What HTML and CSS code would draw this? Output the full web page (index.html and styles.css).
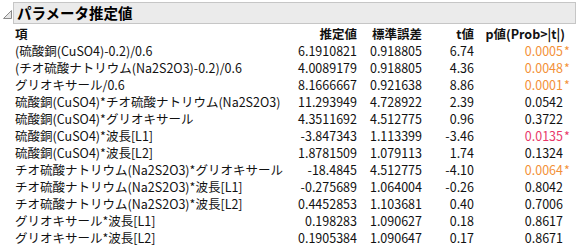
FILE: index.html
```html
<!DOCTYPE html>
<html lang="ja">
<head>
<meta charset="utf-8">
<title>パラメータ推定値</title>
<link rel="stylesheet" href="styles.css">
</head>
<body>
<div class="report">
  <div class="title-row">
    <svg class="tri" width="9" height="9" viewBox="0 0 9 9"><polygon points="8.5,0.5 8.5,8.5 0.5,8.5" fill="#e6e6e6" stroke="#8a8a8a" stroke-width="1"/></svg>
    <div class="title-box">パラメータ推定値</div>
  </div>
  <table class="est">
    <colgroup>
      <col class="c-term"><col class="c-est"><col class="c-se"><col class="c-t"><col class="c-p"><col class="c-star">
    </colgroup>
    <thead>
      <tr><th class="term">項</th><th>推定値</th><th>標準誤差</th><th>t値</th><th colspan="2" class="ph">p値(Prob&gt;|t|)</th></tr>
    </thead>
    <tbody>
      <tr><td class="term">(硫酸銅(CuSO4)-0.2)/0.6</td><td>6.1910821</td><td>0.918805</td><td>6.74</td><td class="sig">0.0005</td><td class="star sig">*</td></tr>
      <tr><td class="term">(チオ硫酸ナトリウム(Na2S2O3)-0.2)/0.6</td><td>4.0089179</td><td>0.918805</td><td>4.36</td><td class="sig">0.0048</td><td class="star sig">*</td></tr>
      <tr><td class="term">グリオキサール/0.6</td><td>8.1666667</td><td>0.921638</td><td>8.86</td><td class="sig">0.0001</td><td class="star sig">*</td></tr>
      <tr><td class="term">硫酸銅(CuSO4)*チオ硫酸ナトリウム(Na2S2O3)</td><td>11.293949</td><td>4.728922</td><td>2.39</td><td>0.0542</td><td class="star"></td></tr>
      <tr><td class="term">硫酸銅(CuSO4)*グリオキサール</td><td>4.3511692</td><td>4.512775</td><td>0.96</td><td>0.3722</td><td class="star"></td></tr>
      <tr><td class="term">硫酸銅(CuSO4)*波長[L1]</td><td>-3.847343</td><td>1.113399</td><td>-3.46</td><td class="sig2">0.0135</td><td class="star sig2">*</td></tr>
      <tr><td class="term">硫酸銅(CuSO4)*波長[L2]</td><td>1.8781509</td><td>1.079113</td><td>1.74</td><td>0.1324</td><td class="star"></td></tr>
      <tr><td class="term">チオ硫酸ナトリウム(Na2S2O3)*グリオキサール</td><td>-18.4845</td><td>4.512775</td><td>-4.10</td><td class="sig">0.0064</td><td class="star sig">*</td></tr>
      <tr><td class="term">チオ硫酸ナトリウム(Na2S2O3)*波長[L1]</td><td>-0.275689</td><td>1.064004</td><td>-0.26</td><td>0.8042</td><td class="star"></td></tr>
      <tr><td class="term">チオ硫酸ナトリウム(Na2S2O3)*波長[L2]</td><td>0.4452853</td><td>1.103681</td><td>0.40</td><td>0.7006</td><td class="star"></td></tr>
      <tr><td class="term">グリオキサール*波長[L1]</td><td>0.198283</td><td>1.090627</td><td>0.18</td><td>0.8617</td><td class="star"></td></tr>
      <tr><td class="term">グリオキサール*波長[L2]</td><td>0.1905384</td><td>1.090647</td><td>0.17</td><td>0.8671</td><td class="star"></td></tr>
    </tbody>
  </table>
</div>
</body>
</html>
```
FILE: styles.css
```css
html, body {
  margin: 0;
  padding: 0;
  background: #ffffff;
}
body {
  font-family: "Noto Sans CJK JP", "Noto Sans", sans-serif;
  font-size: 12.5px;
  color: #111111;
}
.report {
  padding: 2px 4px 0 3px;
}
.title-row {
  display: flex;
  align-items: center;
  gap: 1px;
}
.tri {
  display: block;
  margin-top: 2px;
}
.title-box {
  flex: 1;
  height: 20px;
  box-sizing: content-box;
  border: 1px solid #c6c6c6;
  background: #ebebeb;
  padding-left: 3px;
  font-size: 14.5px;
  font-weight: bold;
  line-height: 20px;
  color: #000;
}
.est {
  margin-left: 12px;
  margin-top: 1px;
  border-collapse: collapse;
  table-layout: fixed;
  width: 557px;
}
.c-term { width: 275px; }
.c-est { width: 67px; }
.c-se { width: 65px; }
.c-t { width: 52px; }
.c-p { width: 89px; }
.c-star { width: 9px; }
.est th, .est td {
  padding: 0;
  height: 17px;
  line-height: 17px;
  text-align: right;
  white-space: nowrap;
  font-weight: normal;
}
.est th {
  font-weight: bold;
}
.est .term {
  text-align: left;
}
.est .ph {
  padding-right: 7px;
}
.est .star {
  text-align: left;
  padding-left: 1px;
}
.sig { color: #f39137; }
.sig2 { color: #e8386a; }
```
